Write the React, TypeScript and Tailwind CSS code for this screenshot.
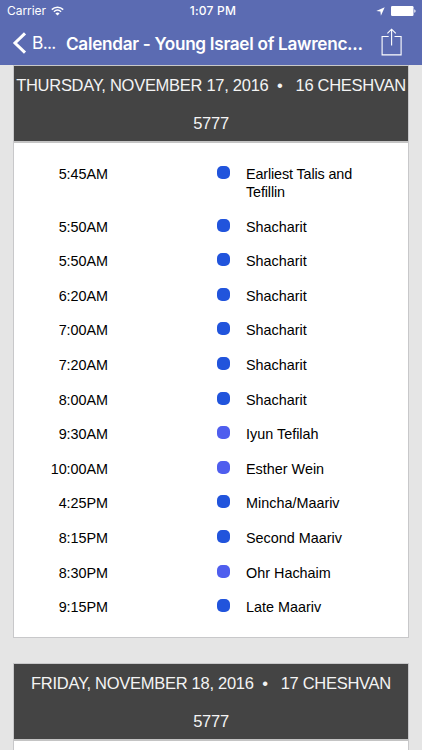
import React from 'react';

interface CalendarEvent {
  time: string;
  title: string;
  special?: boolean;
}

interface DayCardProps {
  date: string;
  hebrewDate: string;
  hebrewYear: string;
  events: CalendarEvent[];
}

const thursdayEvents: CalendarEvent[] = [
  { time: '5:45AM', title: 'Earliest Talis and Tefillin' },
  { time: '5:50AM', title: 'Shacharit' },
  { time: '5:50AM', title: 'Shacharit' },
  { time: '6:20AM', title: 'Shacharit' },
  { time: '7:00AM', title: 'Shacharit' },
  { time: '7:20AM', title: 'Shacharit' },
  { time: '8:00AM', title: 'Shacharit' },
  { time: '9:30AM', title: 'Iyun Tefilah', special: true },
  { time: '10:00AM', title: 'Esther Wein', special: true },
  { time: '4:25PM', title: 'Mincha/Maariv' },
  { time: '8:15PM', title: 'Second Maariv' },
  { time: '8:30PM', title: 'Ohr Hachaim', special: true },
  { time: '9:15PM', title: 'Late Maariv' },
];

const StatusBar: React.FC = () => (
  <div className="grid h-[22px] grid-cols-3 items-center pl-[7px] pr-[6px] text-[12px]">
    <div className="flex items-center gap-[5px]">
      <span className="tracking-[-0.05px]">Carrier</span>
      <svg width="13" height="10" viewBox="0 0 13 10" fill="none" stroke="#fff" strokeWidth="1.5">
        <path d="M0.8 3.6C4 0.4 9 0.4 12.2 3.6" />
        <path d="M2.9 5.7C5 3.8 8 3.8 10.1 5.7" />
        <path d="M6.5 9.6L4.4 7.4C5.6 6.3 7.4 6.3 8.6 7.4Z" fill="#fff" stroke="none" />
      </svg>
    </div>
    <span className="pl-[3px] text-center font-medium tracking-[0.25px]">1:07 PM</span>
    <div className="flex items-center justify-end gap-[6px]">
      <svg width="9" height="9" viewBox="0 0 9 9" fill="#fff">
        <path d="M8.7 0.3L4.9 8.7L4.4 4.6L0.3 4.1Z" />
      </svg>
      <svg width="25" height="10" viewBox="0 0 25 10" fill="#fff">
        <rect width="22.5" height="10" rx="1.2" />
        <path d="M23.3 3.2C25 3.6 25 6.4 23.3 6.8Z" />
      </svg>
    </div>
  </div>
);

const NavBar: React.FC = () => (
  <div className="flex h-[43px] items-center pl-[12px]">
    <svg className="mb-[1px] shrink-0" width="15" height="22" viewBox="0 0 15 22" fill="none" stroke="#fff" strokeWidth="3">
      <path d="M13 1.4L3 11L13 20.6" />
    </svg>
    <span className="ml-[5px] w-[34px] shrink-0 text-[17.4px] tracking-[-0.7px]">B...</span>
    <h1 className="w-[300px] shrink-0 whitespace-nowrap text-[17.2px] font-semibold tracking-[-0.3px]">
      Calendar - Young Israel of Lawrenc...
    </h1>
    <svg className="ml-[15px] mb-[3px] shrink-0" width="21" height="28" viewBox="0 0 21 28" fill="none" stroke="#fff" strokeWidth="1.1">
      <path d="M7.7 8.5H1.1V26.9H20.1V8.5H13.5" />
      <path d="M10.6 17.5V1.2M6.4 5.4L10.6 1.2L14.8 5.4" />
    </svg>
  </div>
);

const DayCard: React.FC<DayCardProps> = ({ date, hebrewDate, hebrewYear, events }) => (
  <section className="border border-[#c8c8ca] bg-white">
    <header className="h-[77px] border-b-2 border-[#c4c4c4] bg-[#444] pt-[1px] text-center text-[16.5px] leading-[37.5px] tracking-[-0.28px] text-[#f4f4f4]">
      <div className="flex justify-center whitespace-pre">
        {date}  •   {hebrewDate}
      </div>
      <div>{hebrewYear}</div>
    </header>
    <ul className="min-h-[494px] pt-[21.6px] text-[14.4px] leading-[18.4px] text-black">
      {events.map((event, i) => (
        <li key={i} className="flex pb-[16.2px]">
          <span className="w-[94px] shrink-0 text-right tracking-[-0.04px]">{event.time}</span>
          <span
            className={`ml-[109px] mt-[1px] h-[13px] w-[13px] shrink-0 rounded-[5px] ${
              event.special ? 'bg-[#4f5eee]' : 'bg-[#2154dc]'
            }`}
          />
          <span
            className={`ml-[16px] w-[130px] ${event.title.length > 15 ? 'tracking-[-0.14px]' : ''}`}
          >
            {event.title}
          </span>
        </li>
      ))}
    </ul>
  </section>
);

const App: React.FC = () => {
  return (
    <div className="h-[750px] w-[422px] overflow-hidden bg-[#e5e5e5] font-['Liberation_Sans',Arial,sans-serif]">
      <div className="h-[65px] bg-[#5b6bb2] font-['Inter','Liberation_Sans',sans-serif] text-white">
        <StatusBar />
        <NavBar />
      </div>
      <main className="flex flex-col gap-[25px] px-[13px]">
        <DayCard
          date="THURSDAY, NOVEMBER 17, 2016"
          hebrewDate="16 CHESHVAN"
          hebrewYear="5777"
          events={thursdayEvents}
        />
        <DayCard
          date="FRIDAY, NOVEMBER 18, 2016"
          hebrewDate="17 CHESHVAN"
          hebrewYear="5777"
          events={[]}
        />
      </main>
    </div>
  );
};

export default App;
